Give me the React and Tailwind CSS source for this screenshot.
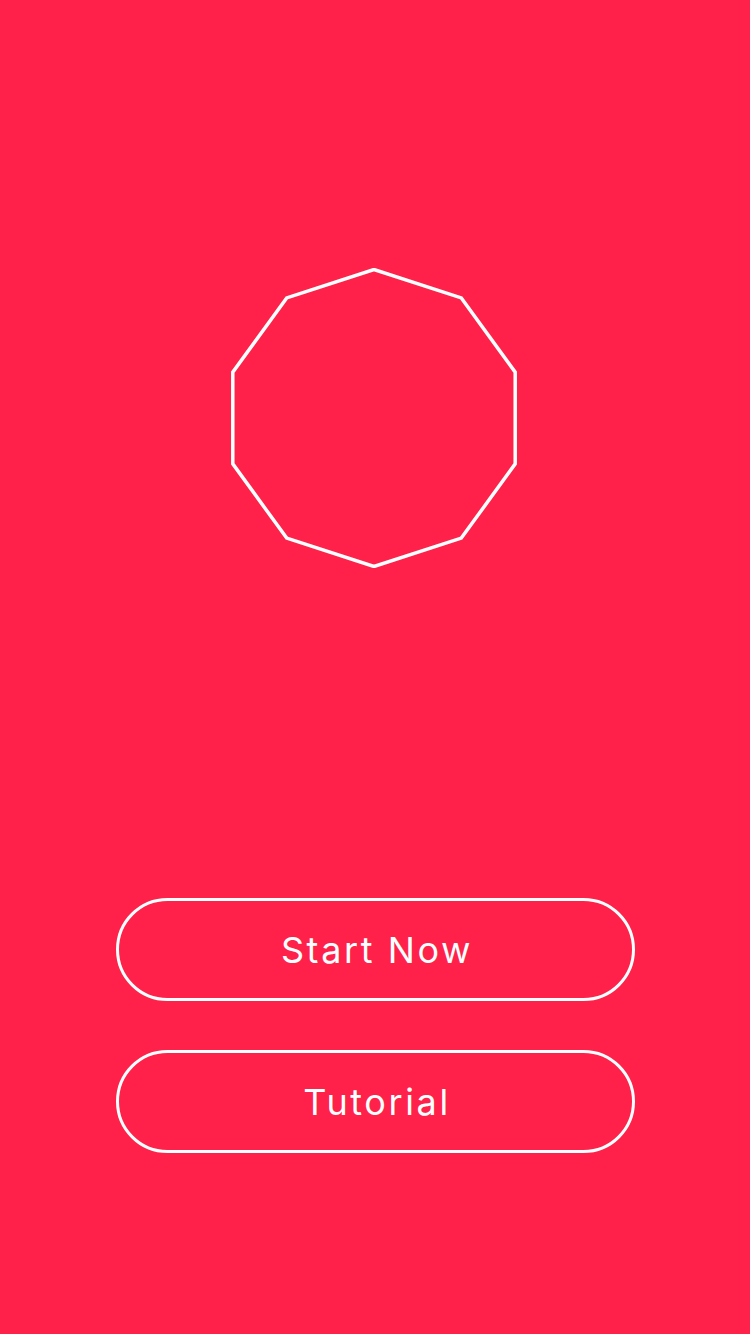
export default function App() {
  return (
    <div className="w-[750px] h-[1334px] bg-[#ff2149] flex flex-col items-center" style={{ fontFamily: "Inter, 'Noto Sans', sans-serif" }}>
      <svg width="300" height="300" viewBox="0 0 300 300" className="mt-[268px] mr-[2px] shrink-0">
        <polygon
          points="150,1.5 237.3,29.9 291.2,104.1 291.2,195.9 237.3,270.1 150,298.5 62.7,270.1 8.8,195.9 8.8,104.1 62.7,29.9"
          fill="none"
          stroke="#ffffff"
          strokeWidth="3.5"
        />
      </svg>
      <div className="mt-[330px] ml-[1px] flex flex-col gap-[49px]">
        <button className="w-[519px] h-[103px] rounded-full border-[3.5px] border-white text-white text-[36px] tracking-[2.6px] pl-[3px] flex items-center justify-center">
          Start Now
        </button>
        <button className="w-[519px] h-[103px] rounded-full border-[3.5px] border-white text-white text-[36px] tracking-[2.6px] pl-[3px] flex items-center justify-center">
          Tutorial
        </button>
      </div>
    </div>
  );
}
